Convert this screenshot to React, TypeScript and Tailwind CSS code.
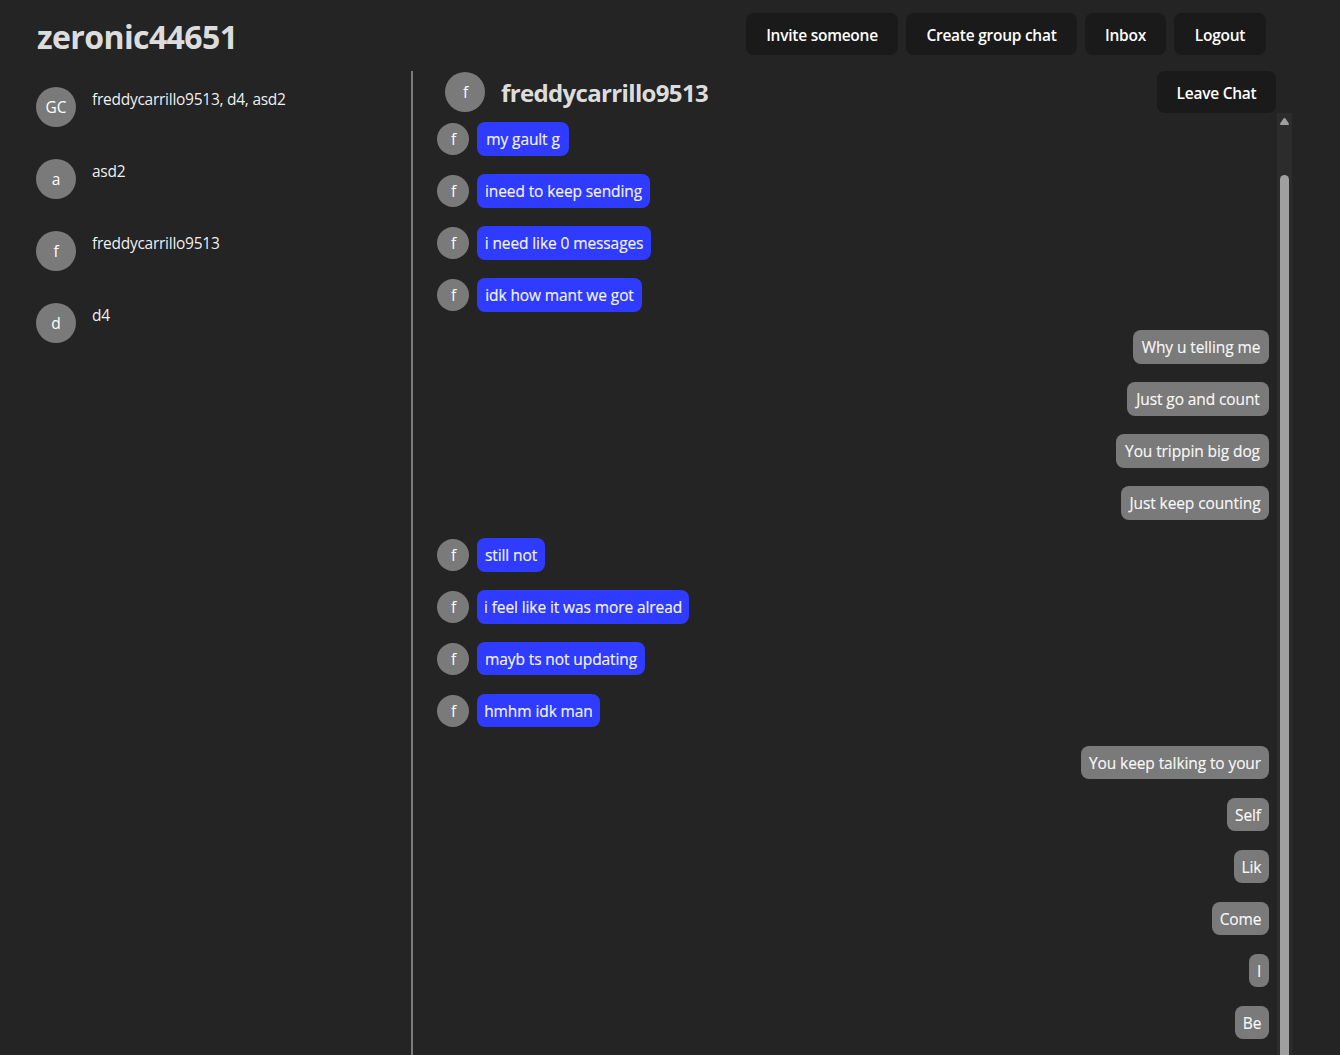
type Message = { text: string; mine?: boolean; size: string };

const chats = [
  { initials: 'GC', name: 'freddycarrillo9513, d4, asd2' },
  { initials: 'a', name: 'asd2' },
  { initials: 'f', name: 'freddycarrillo9513' },
  { initials: 'd', name: 'd4' },
];

const messages: Message[] = [
  { text: 'my gault g', size: 'w-[92px] h-[34px]' },
  { text: 'ineed to keep sending', size: 'w-[173px] h-[34px]' },
  { text: 'i need like 0 messages', size: 'w-[174px] h-[34px]' },
  { text: 'idk how mant we got', size: 'w-[165px] h-[34px]' },
  { text: 'Why u telling me', mine: true, size: 'w-[136px] h-[34px]' },
  { text: 'Just go and count', mine: true, size: 'w-[142px] h-[34px]' },
  { text: 'You trippin big dog', mine: true, size: 'w-[153px] h-[34px]' },
  { text: 'Just keep counting', mine: true, size: 'w-[148px] h-[34px]' },
  { text: 'still not', size: 'w-[68px] h-[34px]' },
  { text: 'i feel like it was more alread', size: 'w-[212px] h-[34px]' },
  { text: 'mayb ts not updating', size: 'w-[168px] h-[33px]' },
  { text: 'hmhm idk man', size: 'w-[123px] h-[33px]' },
  { text: 'You keep talking to your', mine: true, size: 'w-[188px] h-[33px]' },
  { text: 'Self', mine: true, size: 'w-[42px] h-[33px]' },
  { text: 'Lik', mine: true, size: 'w-[35px] h-[33px]' },
  { text: 'Come', mine: true, size: 'w-[57px] h-[33px]' },
  { text: 'I', mine: true, size: 'w-[20px] h-[33px]' },
  { text: 'Be', mine: true, size: 'w-[34px] h-[33px]' },
];

function Avatar({ label, className }: { label: string; className: string }) {
  return (
    <div className={`flex shrink-0 items-center justify-center rounded-full bg-[#7a7a7a] text-[15.5px] text-white ${className}`}>
      {label}
    </div>
  );
}

function Button({ label, width }: { label: string; width: string }) {
  return (
    <button
      className={`flex h-[42px] shrink-0 items-center justify-center whitespace-nowrap rounded-lg bg-[#1a1a1a] pt-0.5 text-[15.5px] font-semibold tracking-[-0.25px] text-white ${width}`}
    >
      {label}
    </button>
  );
}

export default function App() {
  return (
    <div className="flex h-[1055px] w-[1340px] flex-col overflow-hidden bg-[#242424] font-['Open_Sans','Noto_Sans',sans-serif] text-[15px] leading-6 text-white/87">
      <header className="flex h-[71px] shrink-0 justify-between pl-[37px] pr-[74px] pt-[13px]">
        <h1 className="pt-px text-[32px] font-bold leading-[46px] tracking-[-0.6px]">zeronic44651</h1>
        <nav className="flex gap-2">
          <Button label="Invite someone" width="w-[152px]" />
          <Button label="Create group chat" width="w-[171px]" />
          <Button label="Inbox" width="w-[81px]" />
          <Button label="Logout" width="w-[92px]" />
        </nav>
      </header>

      <div className="flex min-h-0 flex-1">
        <aside className="flex w-[413px] shrink-0 flex-col gap-8 border-r-2 border-[#7a7a7a] pl-9 pt-4">
          {chats.map((chat) => (
            <div key={chat.name} className="flex h-10 gap-4">
              <Avatar label={chat.initials} className="size-10" />
              <span className="whitespace-nowrap text-[15.5px] tracking-[-0.26px] text-white/95">{chat.name}</span>
            </div>
          ))}
        </aside>

        <main className="flex w-[879px] shrink-0 flex-col">
          <div className="flex h-[42px] shrink-0 items-center pl-8 pr-4">
            <Avatar label="f" className="size-10 pl-px" />
            <h2 className="ml-4 flex-1 pt-0.5 text-[24px] font-bold leading-9 tracking-[-0.65px]">freddycarrillo9513</h2>
            <Button label="Leave Chat" width="w-[119px]" />
          </div>

          <div className="flex min-h-0 flex-1">
            <ul className="flex flex-1 flex-col overflow-hidden pl-6 pr-2 pt-[9px]">
              {messages.map((m) => (
                <li key={m.text} className={`flex h-[52px] shrink-0 items-start gap-2 ${m.mine ? 'justify-end' : ''}`}>
                  {!m.mine && <Avatar label="f" className="mt-px size-8 pl-px" />}
                  <span
                    className={`whitespace-nowrap rounded-lg pt-[5px] text-center text-[15.5px] tracking-[-0.1px] text-white/95 [-webkit-text-stroke:0.2px] ${m.mine ? 'bg-[#7a7a7a]' : 'bg-[#2f3bff]'} ${m.size}`}
                  >
                    {m.text}
                  </span>
                </li>
              ))}
            </ul>
            <div className="flex w-[15px] flex-col items-center bg-[#2c2c2c] pt-[5px]">
              <svg width="9" height="7" viewBox="0 0 9 7" className="shrink-0 fill-[#9f9f9f]">
                <path d="M3.5 .5Q4.5-.5 5.5 .5L8.7 5.2Q9.3 7 8 7H1Q-.3 7 .3 5.2Z" />
              </svg>
              <div className="mt-[50px] w-[9px] flex-1 rounded-t-full bg-[#9f9f9f]" />
            </div>
          </div>
        </main>
      </div>
    </div>
  );
}
